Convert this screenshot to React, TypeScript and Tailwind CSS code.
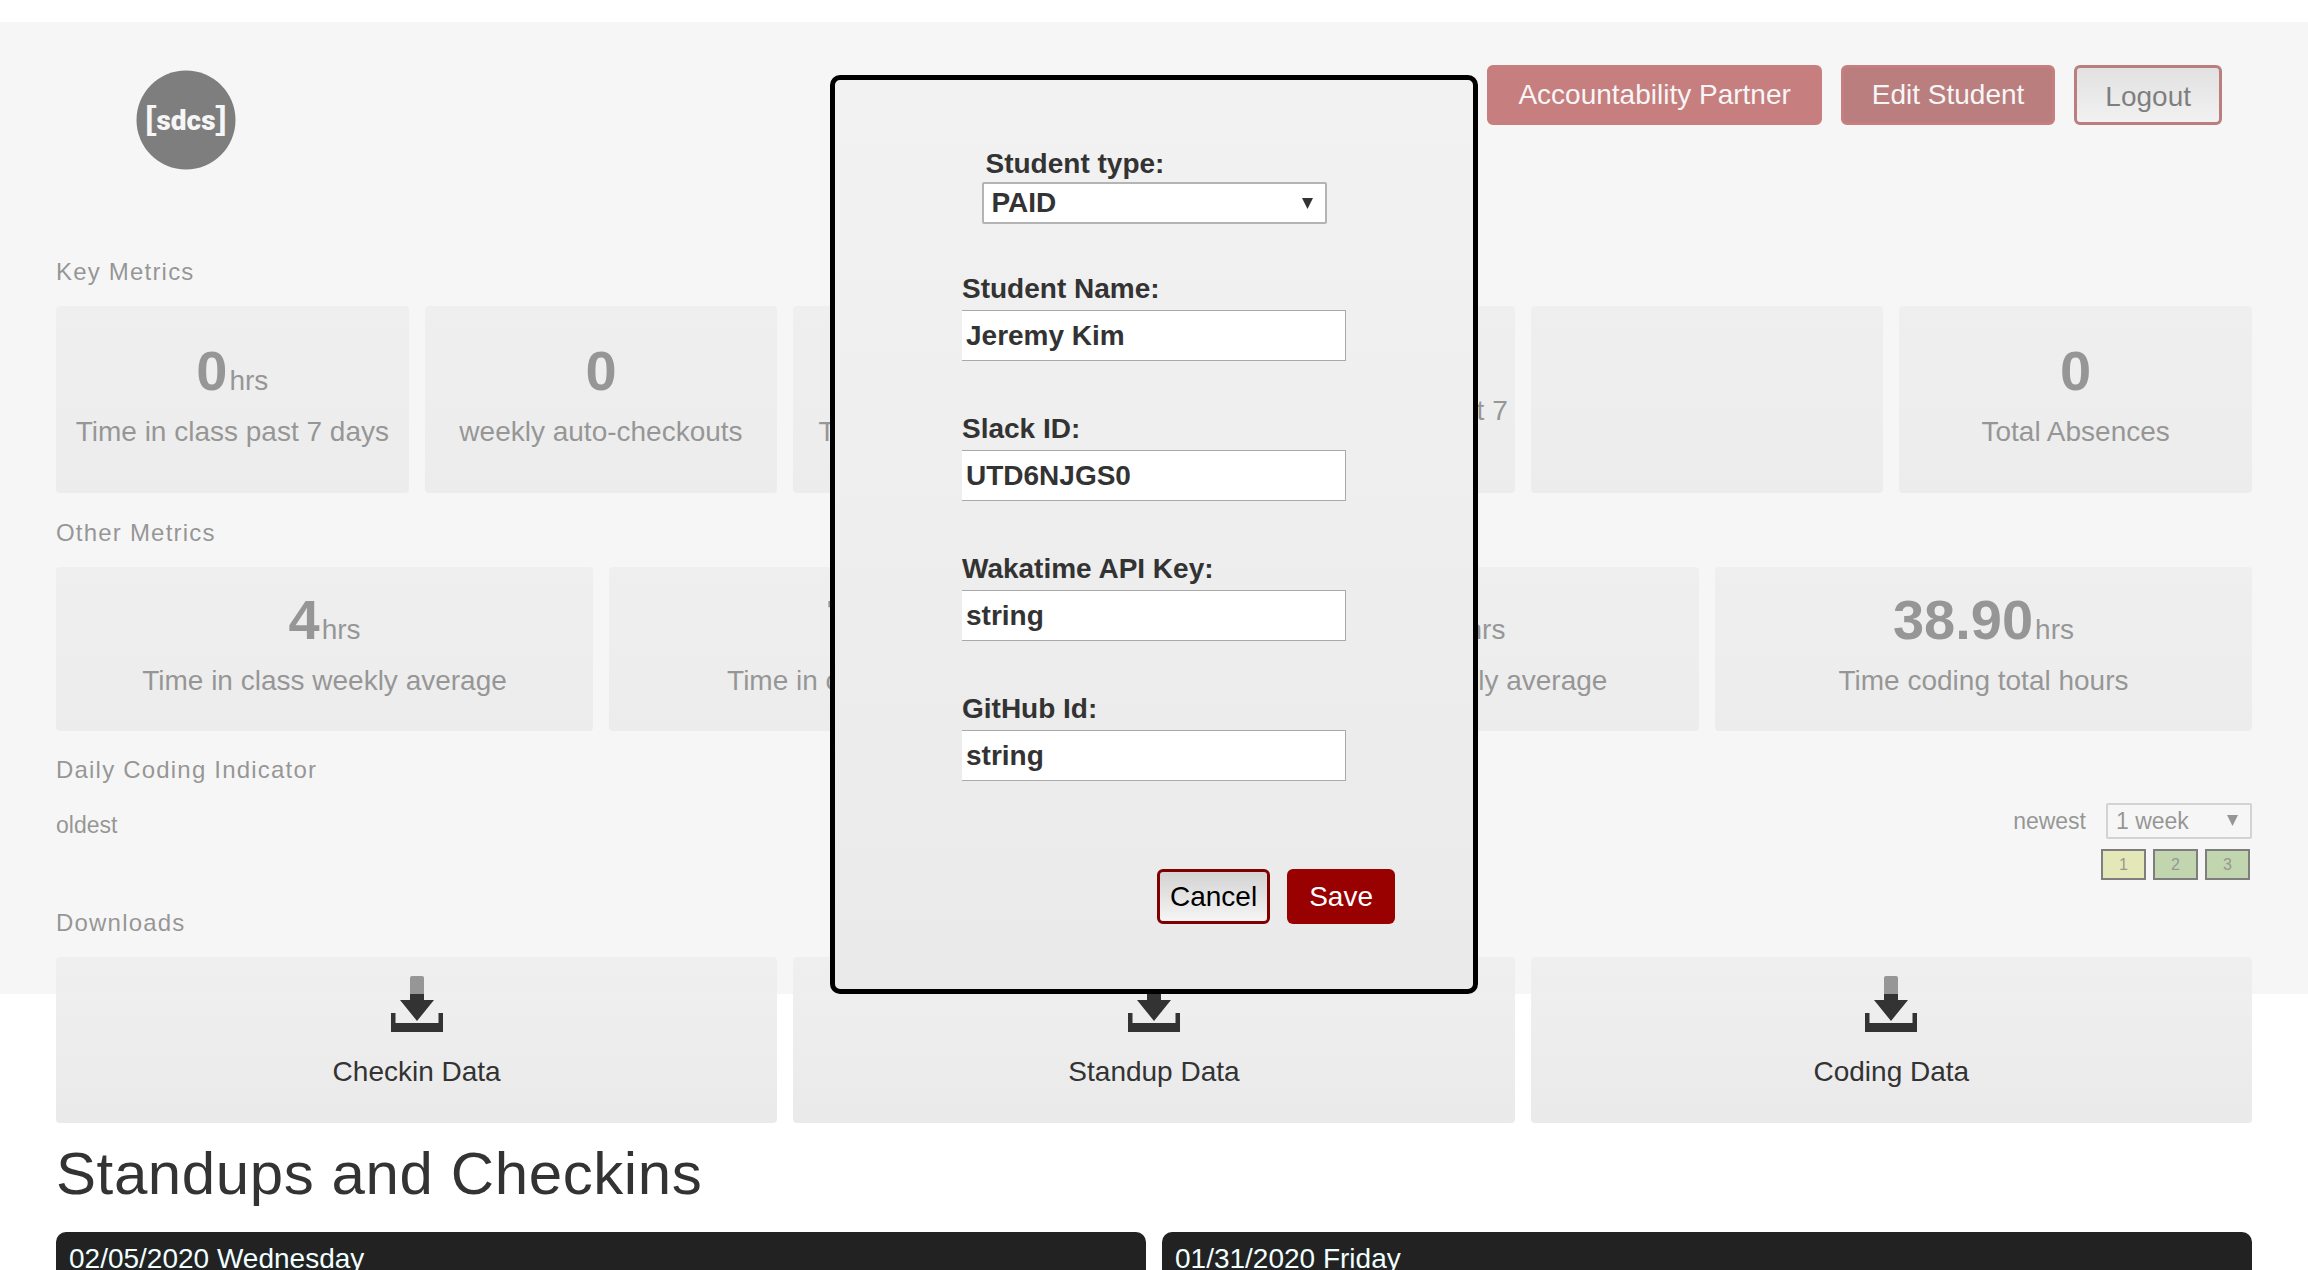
import React, { useId } from "react";

type Metric = { value: string; unit?: string; label: string } | null;

const keyMetrics: Metric[] = [
  { value: "0", unit: "hrs", label: "Time in class past 7 days" },
  { value: "0", label: "weekly auto-checkouts" },
  { value: "0", unit: "hrs", label: "Time coding past 7 days" },
  { value: "0", unit: "hrs", label: "Average coding time past 7 days" },
  null,
  { value: "0", label: "Total Absences" },
];

const otherMetrics: Metric[] = [
  { value: "4", unit: "hrs", label: "Time in class weekly average" },
  { value: "72", unit: "hrs", label: "Time in class total hours" },
  { value: "7.78", unit: "hrs", label: "Time coding weekly average" },
  { value: "38.90", unit: "hrs", label: "Time coding total hours" },
];

const codingDays = [
  { day: "1", tone: "bg-[#d9e07a]" },
  { day: "2", tone: "bg-[#8fba68]" },
  { day: "3", tone: "bg-[#8fba68]" },
];

const downloads = ["Checkin Data", "Standup Data", "Coding Data"];

const days = ["02/05/2020 Wednesday", "01/31/2020 Friday"];

const studentFields = [
  { label: "Student Name:", value: "Jeremy Kim" },
  { label: "Slack ID:", value: "UTD6NJGS0" },
  { label: "Wakatime API Key:", value: "string" },
  { label: "GitHub Id:", value: "string" },
];

function Logo() {
  return (
    <svg viewBox="0 0 100 100" className="mt-[5px] size-[100px]" role="img" aria-label="sdcs">
      <circle cx="50" cy="50" r="49.5" fill="#000" />
      <g fill="#fff" textAnchor="middle">
        <text x="15" y="59" fontSize="34" fontWeight="700" fontFamily="Liberation Sans, sans-serif">[</text>
        <text x="50" y="60" fontSize="28" fontWeight="900" fontFamily="Roboto, sans-serif">sdcs</text>
        <text x="85" y="59" fontSize="34" fontWeight="700" fontFamily="Liberation Sans, sans-serif">]</text>
      </g>
    </svg>
  );
}

function DownloadIcon() {
  return (
    <svg viewBox="0 0 52 56" className="h-14 w-[52px]" fill="#333" aria-hidden="true">
      <path d="M19 2a2 2 0 0 1 2-2h10a2 2 0 0 1 2 2v22h10L26 45 9 24h10z" />
      <path d="M0 37h4.500v10h43V37H52v19H0z" />
    </svg>
  );
}

function Arrow({ className }: { className: string }) {
  return (
    <svg viewBox="0 0 12 12" className={className} fill="#333" aria-hidden="true">
      <path d="M0 0h12L6 12z" />
    </svg>
  );
}

function SectionTitle({ children }: { children: React.ReactNode }) {
  return <h2 className="mb-4 pt-px text-2xl leading-9 tracking-wider">{children}</h2>;
}

function MetricCard({ metric, size }: { metric: Metric; size: string }) {
  return (
    <div
      className={`flex flex-col justify-center rounded bg-linear-to-b from-[#f0f0f0] to-[#eaeaea] pb-2 text-center ${size}`}
    >
      {metric && (
        <>
          <p className="mb-2 text-[56px] leading-16 font-bold">
            {metric.value}
            {metric.unit && <span className="ml-0.5 text-[28px] leading-none font-normal">{metric.unit}</span>}
          </p>
          <p className="text-[28px] leading-[42px]">{metric.label}</p>
        </>
      )}
    </div>
  );
}

function StudentField({ label, value }: { label: string; value: string }) {
  const id = useId();
  return (
    <div className="flex flex-col">
      <label htmlFor={id} className="leading-[42px]">
        {label}
      </label>
      <input
        id={id}
        defaultValue={value}
        className="h-[51px] w-full border border-l-0 border-[#a9a9a9] bg-white px-1 outline-none"
      />
    </div>
  );
}

function EditStudentDialog() {
  return (
    <div className="absolute inset-x-0 top-[22px] flex justify-center bg-[#eeeeee]/53 pt-[53px]">
      <form
        role="dialog"
        aria-label="Edit Student"
        className="w-[648px] rounded-[10px] border-5 border-black bg-linear-to-b from-[#f2f2f2] to-[#eaeaea] pt-[66px] pb-[65px] text-[28px] font-bold"
      >
        <div className="mx-auto mb-11 flex w-[345px] flex-col">
          <label htmlFor="student-type" className="pl-1 leading-9">
            Student type:
          </label>
          <div className="relative">
            <select
              id="student-type"
              className="block h-[42px] w-full appearance-none rounded-xs border-2 border-[#b4b4b4] bg-white px-2 leading-9"
            >
              <option>PAID</option>
            </select>
            <Arrow className="pointer-events-none absolute top-4 right-[14px] size-[11px]" />
          </div>
        </div>
        <div className="mx-auto flex w-96 flex-col gap-[47px]">
          {studentFields.map((field) => (
            <StudentField key={field.label} {...field} />
          ))}
        </div>
        <div className="mt-[88px] mr-[78px] flex justify-end gap-[17px] font-normal">
          <button
            type="button"
            className="h-[55px] rounded-md border-3 border-[#800000] bg-linear-to-b from-[#d3d3d3] to-[#f5f5f5] px-2.5 text-black"
          >
            Cancel
          </button>
          <button type="button" className="h-[55px] rounded-md bg-[#990000] px-[22px] text-white">
            Save
          </button>
        </div>
      </form>
    </div>
  );
}

export default function App() {
  return (
    <div className="relative h-screen overflow-hidden bg-white font-['Liberation_Sans',Arial,sans-serif] text-[#333]">
      <main className="px-14 pt-[65px]">
        <header className="mb-[83px] flex items-start justify-between pr-[30px] pl-20">
          <Logo />
          <nav className="flex gap-[19px] text-[28px]">
            <button type="button" className="h-[60px] rounded-md border-3 border-[#990000] bg-[#990000] px-7 text-white">
              Accountability Partner
            </button>
            <button type="button" className="h-[60px] rounded-md border-3 border-[#990000] bg-[#800000] px-7 text-white">
              Edit Student
            </button>
            <button
              type="button"
              className="h-[60px] rounded-md border-3 border-[#800000] bg-linear-to-b from-[#d3d3d3] to-[#f5f5f5] px-7 pt-1 text-black"
            >
              Logout
            </button>
          </nav>
        </header>

        <section className="mb-[21px]">
          <SectionTitle>Key Metrics</SectionTitle>
          <div className="grid grid-cols-6 gap-4">
            {keyMetrics.map((metric, i) => (
              <MetricCard key={i} metric={metric} size="min-h-[187px]" />
            ))}
          </div>
        </section>

        <section className="mb-[21px]">
          <SectionTitle>Other Metrics</SectionTitle>
          <div className="grid grid-cols-4 gap-4">
            {otherMetrics.map((metric, i) => (
              <MetricCard key={i} metric={metric} size="min-h-[164px]" />
            ))}
          </div>
        </section>

        <section className="mb-6">
          <h2 className="mb-[15px] text-2xl leading-9 tracking-wider">Daily Coding Indicator</h2>
          <div className="flex h-9 items-start justify-between text-[23px] leading-9">
            <span className="pt-1">oldest</span>
            <div className="flex items-center gap-5">
              <label htmlFor="range">newest</label>
              <div className="relative">
                <select
                  id="range"
                  className="block h-9 w-[146px] appearance-none rounded-xs border-2 border-[#b4b4b4] bg-white px-2 leading-8"
                >
                  <option>1 week</option>
                </select>
                <Arrow className="pointer-events-none absolute top-3 right-[14px] size-[11px]" />
              </div>
            </div>
          </div>
          <ol className="mt-2.5 mr-0.5 flex justify-end gap-[7px] text-base leading-[27px]">
            {codingDays.map(({ day, tone }) => (
              <li key={day} className={`w-[45px] border-2 border-black text-center ${tone}`}>
                {day}
              </li>
            ))}
          </ol>
        </section>

        <section className="mb-[11px]">
          <SectionTitle>Downloads</SectionTitle>
          <div className="grid grid-cols-3 gap-4">
            {downloads.map((label) => (
              <button
                key={label}
                type="button"
                className="flex flex-col items-center gap-[19px] rounded bg-linear-to-b from-[#f0f0f0] to-[#eaeaea] pt-[19px] pb-[30px] text-[28px] leading-[42px]"
              >
                <DownloadIcon />
                {label}
              </button>
            ))}
          </div>
        </section>

        <section>
          <h1 className="mb-[18px] text-6xl leading-20 tracking-[0.01em]">Standups and Checkins</h1>
          <div className="grid grid-cols-2 gap-4">
            {days.map((day) => (
              <h3
                key={day}
                className="rounded-t-[10px] bg-[#222] px-[13px] py-1.5 text-[28px] leading-[42px] text-[#f0ffff]"
              >
                {day}
              </h3>
            ))}
          </div>
        </section>
      </main>

      <EditStudentDialog />
    </div>
  );
}
